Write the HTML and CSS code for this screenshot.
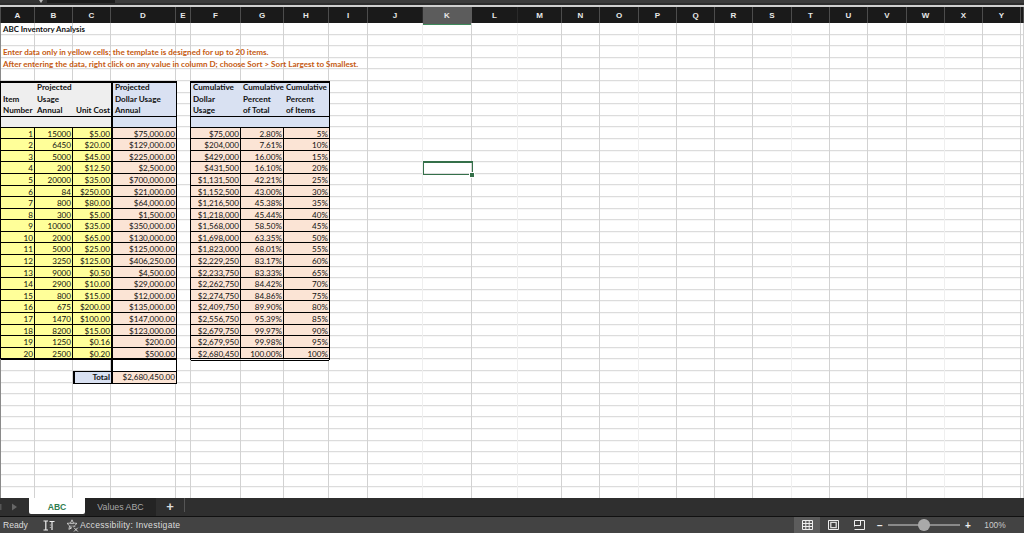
FILE: index.html
```html
<!DOCTYPE html>
<html lang="en">
<head>
<meta charset="utf-8">
<title>ABC Inventory Analysis</title>
<link rel="stylesheet" href="styles.css">
</head>
<body>
<div class="app">
  <div class="topbar">
    <div class="tb-a"><span class="tb-arrow"></span></div>
    <div class="tb-b"></div>
    <div class="tb-c"></div>
  </div>
  <div class="cols cols-head">
    <div>A</div><div>B</div><div>C</div><div>D</div><div>E</div><div>F</div><div>G</div><div>H</div><div>I</div><div class="dim">J</div><div class="sel">K</div><div class="dim">L</div><div>M</div><div>N</div><div>O</div><div>P</div><div>Q</div><div>R</div><div>S</div><div>T</div><div>U</div><div>V</div><div>W</div><div>X</div><div>Y</div><div></div>
  </div>
  <div class="sheet">
    <div class="cols lines">
      <div></div><div></div><div></div><div></div><div></div><div></div><div></div><div></div><div></div><div class="lt"></div><div></div><div class="lt"></div><div></div><div></div><div class="lt"></div><div></div><div></div><div></div><div class="lt"></div><div></div><div></div><div></div><div class="lt"></div><div></div><div></div><div></div>
    </div>
    <div class="content">
      <div class="row title">ABC Inventory Analysis</div>
      <div class="row"></div>
      <div class="row note">Enter data only in yellow cells; the template is designed for up to 20 items.</div>
      <div class="row note">After entering the data, right click on any value in column D; choose Sort &gt; Sort Largest to Smallest.</div>
      <div class="row"></div>
      <div class="tables">
        <div class="left">
          <div class="tbl tbl-l">
            <div class="hg"></div><div class="hg tl">Projected</div><div class="hg"></div><div class="hb tl dl">Projected</div>
            <div class="hg tl">Item</div><div class="hg tl">Usage</div><div class="hg"></div><div class="hb tl dl">Dollar Usage</div>
            <div class="hg tl">Number</div><div class="hg tl">Annual</div><div class="hg tr">Unit Cost</div><div class="hb tl dl">Annual</div>
            <div class="hg end"></div><div class="hg end"></div><div class="hg end"></div><div class="hb end dl"></div>

            <div class="y">1</div><div class="y">15000</div><div class="y yc">$5.00</div><div class="p dl">$75,000.00</div>
            <div class="y">2</div><div class="y">6450</div><div class="y yc">$20.00</div><div class="p dl">$129,000.00</div>
            <div class="y">3</div><div class="y">5000</div><div class="y yc">$45.00</div><div class="p dl">$225,000.00</div>
            <div class="y">4</div><div class="y">200</div><div class="y yc">$12.50</div><div class="p dl">$2,500.00</div>
            <div class="y">5</div><div class="y">20000</div><div class="y yc">$35.00</div><div class="p dl">$700,000.00</div>
            <div class="y">6</div><div class="y">84</div><div class="y yc">$250.00</div><div class="p dl">$21,000.00</div>
            <div class="y">7</div><div class="y">800</div><div class="y yc">$80.00</div><div class="p dl">$64,000.00</div>
            <div class="y">8</div><div class="y">300</div><div class="y yc">$5.00</div><div class="p dl">$1,500.00</div>
            <div class="y">9</div><div class="y">10000</div><div class="y yc">$35.00</div><div class="p dl">$350,000.00</div>
            <div class="y">10</div><div class="y">2000</div><div class="y yc">$65.00</div><div class="p dl">$130,000.00</div>
            <div class="y">11</div><div class="y">5000</div><div class="y yc">$25.00</div><div class="p dl">$125,000.00</div>
            <div class="y">12</div><div class="y">3250</div><div class="y yc">$125.00</div><div class="p dl">$406,250.00</div>
            <div class="y">13</div><div class="y">9000</div><div class="y yc">$0.50</div><div class="p dl">$4,500.00</div>
            <div class="y">14</div><div class="y">2900</div><div class="y yc">$10.00</div><div class="p dl">$29,000.00</div>
            <div class="y">15</div><div class="y">800</div><div class="y yc">$15.00</div><div class="p dl">$12,000.00</div>
            <div class="y">16</div><div class="y">675</div><div class="y yc">$200.00</div><div class="p dl">$135,000.00</div>
            <div class="y">17</div><div class="y">1470</div><div class="y yc">$100.00</div><div class="p dl">$147,000.00</div>
            <div class="y">18</div><div class="y">8200</div><div class="y yc">$15.00</div><div class="p dl">$123,000.00</div>
            <div class="y">19</div><div class="y">1250</div><div class="y yc">$0.16</div><div class="p dl">$200.00</div>
            <div class="y">20</div><div class="y">2500</div><div class="y yc">$0.20</div><div class="p dl">$500.00</div>
          </div>
          <div class="tail">
            <div class="tail-blank"></div>
            <div class="total-label">Total</div>
            <div class="total-value">$2,680,450.00</div>
          </div>
        </div>
        <div class="tbl tbl-r">
          <div class="hb tl">Cumulative</div><div class="hb tl">Cumulative</div><div class="hb tl">Cumulative</div>
          <div class="hb tl">Dollar</div><div class="hb tl">Percent</div><div class="hb tl">Percent</div>
          <div class="hb tl">Usage</div><div class="hb tl">of Total</div><div class="hb tl">of Items</div>
          <div class="hb end"></div><div class="hb end"></div><div class="hb end"></div>

          <div class="p pv">$75,000</div><div class="p pv">2.80%</div><div class="p">5%</div>
          <div class="p pv">$204,000</div><div class="p pv">7.61%</div><div class="p">10%</div>
          <div class="p pv">$429,000</div><div class="p pv">16.00%</div><div class="p">15%</div>
          <div class="p pv">$431,500</div><div class="p pv">16.10%</div><div class="p">20%</div>
          <div class="p pv">$1,131,500</div><div class="p pv">42.21%</div><div class="p">25%</div>
          <div class="p pv">$1,152,500</div><div class="p pv">43.00%</div><div class="p">30%</div>
          <div class="p pv">$1,216,500</div><div class="p pv">45.38%</div><div class="p">35%</div>
          <div class="p pv">$1,218,000</div><div class="p pv">45.44%</div><div class="p">40%</div>
          <div class="p pv">$1,568,000</div><div class="p pv">58.50%</div><div class="p">45%</div>
          <div class="p pv">$1,698,000</div><div class="p pv">63.35%</div><div class="p">50%</div>
          <div class="p pv">$1,823,000</div><div class="p pv">68.01%</div><div class="p">55%</div>
          <div class="p pv">$2,229,250</div><div class="p pv">83.17%</div><div class="p">60%</div>
          <div class="p pv">$2,233,750</div><div class="p pv">83.33%</div><div class="p">65%</div>
          <div class="p pv">$2,262,750</div><div class="p pv">84.42%</div><div class="p">70%</div>
          <div class="p pv">$2,274,750</div><div class="p pv">84.86%</div><div class="p">75%</div>
          <div class="p pv">$2,409,750</div><div class="p pv">89.90%</div><div class="p">80%</div>
          <div class="p pv">$2,556,750</div><div class="p pv">95.39%</div><div class="p">85%</div>
          <div class="p pv">$2,679,750</div><div class="p pv">99.97%</div><div class="p">90%</div>
          <div class="p pv">$2,679,950</div><div class="p pv">99.98%</div><div class="p">95%</div>
          <div class="p pv">$2,680,450</div><div class="p pv">100.00%</div><div class="p">100%</div>
        </div>
      </div>
    </div>
    <div class="cursor"><span class="handle"></span></div>
  </div>
  <div class="tabs">
    <svg class="nav" width="29" height="12" viewBox="0 0 29 12"><rect x="0" y="3" width="1.5" height="6" fill="#555"/><path d="M12 2.5 L17 6 L12 9.5 Z" fill="#666"/></svg>
    <div class="tab active">ABC</div>
    <div class="tab">Values ABC</div>
    <div class="add">+</div>
    <div class="tab-sep"></div>
  </div>
  <div class="status">
    <span class="ready">Ready</span>
    <svg class="st-ico macro" width="12" height="11" viewBox="0 0 12 11"><path d="M0.5 1 H5 M2.8 1 V10 M0.5 10 H5 M6.5 1.5 H11.5 M9 1.5 V10" stroke="#eee" stroke-width="1.2" fill="none"/><path d="M6.8 5 H7.8 M6.8 7.5 H7.8" stroke="#bbb"/></svg>
    <svg class="st-ico access" width="13" height="13" viewBox="0 0 13 13"><path d="M6 0.8 L7.4 4 L11 4.4 L8.4 6.8 L9 8 M6 0.8 L4.6 4 L1 4.4 L3.6 6.8 L2.9 10.4 L6 8.6 M4.2 4.6 H7.8 M5 6.5 L4.5 10 M7 6.5 L7.3 8" stroke="#ddd" stroke-width="0.8" fill="none"/><path d="M8 8.7 L11.8 12.5 M11.8 8.7 L8 12.5" stroke="#e4e4e4" stroke-width="0.9"/></svg>
    <span class="acc-text">Accessibility: Investigate</span>
    <div class="st-right">
      <div class="view on">
        <svg width="11" height="10" viewBox="0 0 11 10"><path d="M0.5 0.5 H10.5 V9.5 H0.5 Z M0.5 3.5 H10.5 M0.5 6.5 H10.5 M3.8 0.5 V9.5 M7.2 0.5 V9.5" stroke="#eee" fill="none"/></svg>
      </div>
      <div class="view">
        <svg width="11" height="10" viewBox="0 0 11 10"><path d="M0.5 0.5 H10.5 V9.5 H0.5 Z" stroke="#eee" fill="none"/><path d="M2.8 2.4 H8.2 V7.6 H2.8 Z" stroke="#ddd" stroke-width="1.3" fill="none"/></svg>
      </div>
      <div class="view">
        <svg width="11" height="10" viewBox="0 0 11 10"><path d="M0.5 6.5 V0.5 H10.5 V9.5 H0.5 M6.5 0.5 V5.5 H0.5" stroke="#eee" fill="none"/></svg>
      </div>
      <span class="zoom-sign">−</span>
      <div class="slider"><span class="thumb"></span></div>
      <span class="zoom-sign plus">+</span>
      <span class="pct">100%</span>
    </div>
  </div>
</div>
</body>
</html>
```
FILE: styles.css
```css
* { box-sizing: border-box; }
html, body { margin: 0; height: 100%; overflow: hidden; background: #fff; }
.app {
  display: flex;
  flex-direction: column;
  width: 1024px;
  height: 533px;
  font-family: Lato, "Liberation Sans", sans-serif;
  color: #111;
}

/* top strip */
.topbar {
  display: flex;
  height: 7px;
  background: #2c2c2c;
  border-bottom: 2px solid #cfcfcf;
  flex: none;
}
.tb-a { width: 47px; height: 3px; background: #333; display: flex; justify-content: flex-end; padding-right: 4px; }
.tb-arrow { width: 0; height: 0; border: 2.5px solid transparent; border-top: 3px solid #bbb; border-bottom: 0; }
.tb-b { width: 68px; height: 3px; background: #1c1c1c; }
.tb-c { flex: 1; height: 3px; background: #3c3c3c; }

/* shared column tracks */
.cols {
  display: grid;
  grid-template-columns: 34px 38px 38px 65px 15px 50px 43px 45px 39px 55px 49px 46px 44px 38px 39px 38px 38px 38px 39px 38px 38px 39px 38px 38px 38px 3px;
  padding-left: 1px;
}

/* column header */
.cols-head {
  height: 16px;
  flex: none;
  background: #1a1a1a;
  font-family: "Liberation Sans", sans-serif;
  font-size: 8px;
  font-weight: 700;
  line-height: 17px;
  text-align: center;
  color: #e8e8e8;
}
.cols-head div { border-right: 1px solid #4c4c4c; }
.cols-head .dim { border-right-color: #2a2a2a; }
.cols-head div:first-child { box-shadow: -1px 0 0 #4c4c4c; }
.cols-head .sel { background: #5c5c5c; border-bottom: 1.5px solid #3f8a5c; border-right-color: #5c5c5c; }

/* sheet body */
.sheet {
  position: relative;
  flex: 1;
  display: grid;
  min-height: 0;
  background-image: repeating-linear-gradient(to bottom, transparent 0, transparent 10.6px, #d4d4d4 10.6px, #d4d4d4 11.6px);
  background-position: 0 0.2px;
  box-shadow: inset 1px 0 0 #8a8a8a;
}
.lines, .content { grid-area: 1 / 1; min-height: 0; }
.lines div { border-right: 1px solid #d2d2d2; }
.lines .lt { border-right-color: #efefef; }

.content { padding-left: 1px; padding-top: 0.2px; font-size: 8.1px; line-height: 11.6px; }
.row { height: 11.6px; white-space: nowrap; padding: 1px 0 0 2px; }
.title { font-weight: 700; color: #111; font-size: 7.9px; }
.note { font-weight: 700; color: #c55a11; }

/* tables */
.tables { display: flex; gap: 15px; }
.tbl { position: relative; display: grid; grid-auto-rows: 11.6px; box-shadow: 0 1px 0 #000, 1px 0 0 #000, -1px 0 0 #000; white-space: nowrap; }
.tbl::before { content: ""; position: absolute; left: 0; right: 0; top: 0; height: 1.5px; background: #000; }
.tbl-l { grid-template-columns: 34px 38px 38px 65px; width: 175px; }
.tbl-r { grid-template-columns: 50px 43px 45px; width: 138px; height: 278.4px; }
.tbl > div { text-align: right; padding: 1px 1px 0; }
.tbl > .tl { text-align: left; padding-left: 2px; font-weight: 700; }
.tbl > .tr { font-weight: 700; }
.hg { background: #eeeeee; }
.hb { background: #d9e1f2; }
.end { border-top: 1px solid #000; border-bottom: 1px solid #000; }
.y { background: #ffff99; border-right: 1px solid #000; border-bottom: 1px solid #000; }
.yc { border-right-width: 0; }
.p { background: #fbe4d5; border-bottom: 1px solid #000; }
.pv { border-right: 1px solid #000; }
.dl { border-left: 2px solid #000; }

.tail {
  display: grid;
  grid-template-columns: 38px 65px;
  grid-template-rows: 11.6px 11.6px;
  margin-left: 72px;
  width: 103px;
}
.tail-blank {
  grid-column: 2;
  background: #fff;
  border-left: 2px solid #000;
  box-shadow: 1px 0 0 #000;
}
.total-label,
.total-value {
  text-align: right;
  padding-right: 1px;
  border-top: 1px solid #000;
  border-left: 2px solid #000;
  box-shadow: 0 1px 0 #000;
  line-height: 11.6px;
}
.total-label { background: #d9e1f2; font-weight: 700; }
.total-value { background: #fbe4d5; box-shadow: 0 1px 0 #000, 1px 0 0 #000, 1px 1px 0 #000; }

/* selected cell */
.cursor {
  position: absolute;
  left: 423px;
  top: 138.2px;
  width: 49.5px;
  height: 14px;
  border: 1.5px solid #35704a;
  border-top-width: 2px;
}
.handle {
  position: absolute;
  right: -2.5px;
  bottom: -2.5px;
  width: 4px;
  height: 4px;
  background: #35704a;
  outline: 1px solid #fff;
}

/* sheet tabs */
.tabs {
  flex: none;
  height: 19px;
  display: flex;
  background: #2f2f2f;
  border-bottom: 1px solid #111;
  font-family: "Liberation Sans", sans-serif;
  font-size: 8.8px;
}
.nav { flex: none; align-self: center; }
.tab {
  height: 18px;
  line-height: 18px;
  text-align: center;
  width: 71px;
  background: #242424;
  color: #a8a8a8;
}
.tab.active {
  width: 56px;
  height: 16px;
  background: #fff;
  color: #2f7d4f;
  font-weight: 700;
  font-size: 8.6px;
  border-radius: 0 0 2px 2px;
}
.add { width: 28px; text-align: center; color: #ddd; font-size: 13px; font-weight: 700; line-height: 17px; }
.tab-sep { width: 1px; height: 14px; background: #555; }

/* status bar */
.status {
  flex: none;
  height: 16px;
  display: flex;
  align-items: center;
  background: #434343;
  color: #dcdcdc;
  font-family: "Liberation Sans", sans-serif;
  font-size: 8.6px;
  padding-left: 3px;
}
.ready { width: 40px; }
.st-ico { flex: none; }
.access { margin-left: 11px; margin-right: 1px; }
.acc-text { letter-spacing: 0.28px; }
.st-right { margin-left: auto; display: flex; align-items: center; height: 100%; }
.view { width: 26px; height: 100%; display: flex; align-items: center; justify-content: center; }
.view.on { background: #5c5c5c; }
.zoom-sign { width: 8px; margin-left: 4px; text-align: center; color: #eee; font-size: 10px; font-weight: 700; }
.slider { position: relative; width: 72px; height: 2.5px; margin-left: 4px; background: #8a8a8a; }
.thumb { position: absolute; left: 30.25px; top: -4.5px; width: 11.5px; height: 11.5px; border-radius: 50%; background: #a9a9a9; }
.pct { width: 46px; margin-right: 6px; text-align: center; font-size: 8.4px; color: #ccc; }
```
